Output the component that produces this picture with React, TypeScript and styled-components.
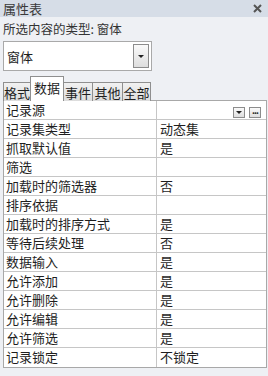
import styled, { createGlobalStyle } from 'styled-components';

const GlobalStyle = createGlobalStyle`
	html, body {
		margin: 0;
		padding: 0;
		background: #eef0f4;
	}
	* {
		box-sizing: border-box;
	}
`;

const Panel = styled.div`
	width: 268px;
	height: 376px;
	background: #eef0f4;
	font-family: 'Noto Sans CJK SC', 'Noto Sans', sans-serif;
	font-size: 12px;
	color: #1e1e1e;
	display: flex;
	flex-direction: column;
	overflow: hidden;
`;

const TitleBar = styled.div`
	height: 17px;
	background: #d6dde7;
	display: flex;
	align-items: center;
	justify-content: space-between;
	padding: 0 6px 0 3px;
	font-size: 13px;
	color: #3a3a3a;
	line-height: 17px;
`;

const Close = styled.svg`
	width: 9px;
	height: 9px;
`;

const Body = styled.div`
	padding: 0 1px 0 3px;
	display: flex;
	flex-direction: column;
`;

const TypeLabel = styled.div`
	margin-top: 4px;
	height: 16px;
	line-height: 16px;
	font-size: 12.5px;
	color: #333;
`;

const Combo = styled.div`
	margin-top: 4px;
	width: 149px;
	height: 30px;
	background: #fff;
	border: 1px solid #a9a9a9;
	display: flex;
	align-items: center;
	justify-content: space-between;
	padding: 0 2px 0 3px;
	font-size: 13px;
`;

const DropButton = styled.div<{ small?: boolean }>`
	width: ${p => (p.small ? '12px' : '16px')};
	height: ${p => (p.small ? '11px' : '24px')};
	border: 1px solid #8c8c8c;
	background: linear-gradient(#fafafa, #dedede);
	display: flex;
	align-items: center;
	justify-content: center;
`;

const Arrow = styled.div`
	width: 0;
	height: 0;
	border-left: 3px solid transparent;
	border-right: 3px solid transparent;
	border-top: 3px solid #222;
`;

const Dots = styled.span`
	font-size: 9px;
	line-height: 6px;
	font-weight: bold;
	letter-spacing: -1px;
	margin-top: -3px;
`;

const TabStrip = styled.div`
	margin-top: 5px;
	display: flex;
	align-items: flex-end;
	height: 25px;
`;

const Tab = styled.div<{ active?: boolean; w: number }>`
	width: ${p => p.w}px;
	height: ${p => (p.active ? 25 : 19)}px;
	border: 1px solid #8f8f8f;
	border-bottom: none;
	margin-left: -1px;
	padding-top: ${p => (p.active ? 3 : 2)}px;
	background: ${p => (p.active ? '#fff' : 'linear-gradient(#f1f1f1, #dcdcdc)')};
	text-align: center;
	font-size: 13px;
	line-height: 15px;
	white-space: nowrap;
	position: relative;
	z-index: ${p => (p.active ? 1 : 0)};
	&:first-child {
		margin-left: 0;
	}
`;

const Grid = styled.div`
	width: 264px;
	background: #fff;
	border: 1px solid #a8a8a8;
	margin-top: -1px;
`;

const Row = styled.div`
	display: grid;
	grid-template-columns: 153px 1fr;
	height: 19px;
	border-bottom: 1px solid #c6c6c6;
	&:last-child {
		border-bottom: none;
	}
`;

const Name = styled.div`
	padding-left: 2px;
	line-height: 18px;
	border-right: 1px solid #c6c6c6;
	font-size: 13px;
`;

const Value = styled.div`
	padding: 0 5px 1px 3px;
	line-height: 18px;
	font-size: 13px;
	display: flex;
	align-items: flex-end;
	gap: 4px;
`;

const ValueText = styled.span`
	flex: 1;
	align-self: center;
`;

const tabs = [
	{ label: '格式', w: 28 },
	{ label: '数据', w: 34, active: true },
	{ label: '事件', w: 30 },
	{ label: '其他', w: 31 },
	{ label: '全部', w: 29 }
];

const rows: [string, string][] = [
	['记录集类型', '动态集'],
	['抓取默认值', '是'],
	['筛选', ''],
	['加载时的筛选器', '否'],
	['排序依据', ''],
	['加载时的排序方式', '是'],
	['等待后续处理', '否'],
	['数据输入', '是'],
	['允许添加', '是'],
	['允许删除', '是'],
	['允许编辑', '是'],
	['允许筛选', '是'],
	['记录锁定', '不锁定']
];

function App() {
	return (
		<Panel>
			<GlobalStyle />
			<TitleBar>
				<span>属性表</span>
				<Close viewBox="0 0 9 9">
					<path d="M1 1 L8 8 M8 1 L1 8" stroke="#555" strokeWidth="2" />
				</Close>
			</TitleBar>
			<Body>
				<TypeLabel>所选内容的类型: 窗体</TypeLabel>
				<Combo>
					<span>窗体</span>
					<DropButton>
						<Arrow />
					</DropButton>
				</Combo>
				<TabStrip>
					{tabs.map(t => (
						<Tab key={t.label} w={t.w} active={t.active}>
							{t.label}
						</Tab>
					))}
				</TabStrip>
				<Grid>
					<Row>
						<Name>记录源</Name>
						<Value>
							<ValueText />
							<DropButton small>
								<Arrow />
							</DropButton>
							<DropButton small>
								<Dots>...</Dots>
							</DropButton>
						</Value>
					</Row>
					{rows.map(([name, value]) => (
						<Row key={name}>
							<Name>{name}</Name>
							<Value>
								<ValueText>{value}</ValueText>
							</Value>
						</Row>
					))}
				</Grid>
			</Body>
		</Panel>
	);
}

export default App;
